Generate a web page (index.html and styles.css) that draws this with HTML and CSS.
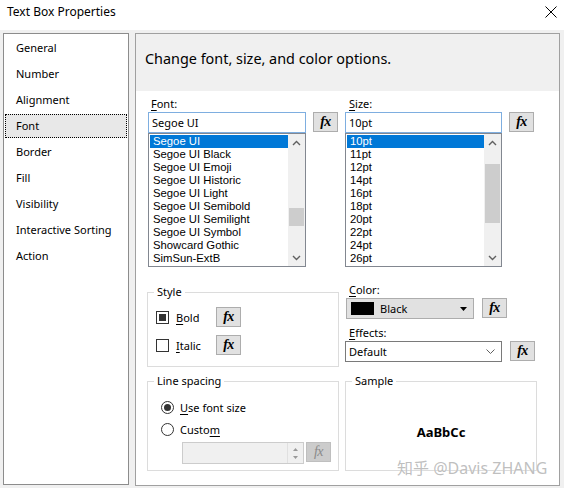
FILE: index.html
```html
<!DOCTYPE html>
<html>
<head>
<meta charset="utf-8">
<link rel="stylesheet" href="styles.css">
</head>
<body>
<div class="titlebar">
  <span class="title">Text Box Properties</span>
  <svg class="close" width="12" height="12" viewBox="0 0 12 12"><path d="M0.5 0.5 L11.5 11.5 M11.5 0.5 L0.5 11.5" stroke="#000" stroke-width="1" fill="none"/></svg>
</div>
<div class="main">
  <div class="nav">
    <div class="nav-item">General</div>
    <div class="nav-item">Number</div>
    <div class="nav-item">Alignment</div>
    <div class="nav-item selected">Font</div>
    <div class="nav-item">Border</div>
    <div class="nav-item">Fill</div>
    <div class="nav-item">Visibility</div>
    <div class="nav-item">Interactive Sorting</div>
    <div class="nav-item">Action</div>
  </div>
  <div class="content">
    <div class="header">Change font, size, and color options.</div>
    <div class="body">
      <div class="grid">
        <div class="col">
          <div class="label"><u>F</u>ont:</div>
          <div class="input-row">
            <div class="textbox font-box">Segoe UI</div>
            <div class="fx">fx</div>
          </div>
          <div class="listbox font-list">
            <div class="items">
              <div class="item sel">Segoe UI</div>
              <div class="item">Segoe UI Black</div>
              <div class="item">Segoe UI Emoji</div>
              <div class="item">Segoe UI Historic</div>
              <div class="item">Segoe UI Light</div>
              <div class="item">Segoe UI Semibold</div>
              <div class="item">Segoe UI Semilight</div>
              <div class="item">Segoe UI Symbol</div>
              <div class="item">Showcard Gothic</div>
              <div class="item">SimSun-ExtB</div>
            </div>
            <div class="scrollbar">
              <div class="arrow"><svg width="9" height="6" viewBox="0 0 9 6"><path d="M1 5 L4.5 1.5 L8 5" stroke="#606060" stroke-width="1.4" fill="none"/></svg></div>
              <div class="track"><div class="thumb font-thumb"></div></div>
              <div class="arrow"><svg width="9" height="6" viewBox="0 0 9 6"><path d="M1 1 L4.5 4.5 L8 1" stroke="#606060" stroke-width="1.4" fill="none"/></svg></div>
            </div>
          </div>
        </div>
        <div class="col">
          <div class="label"><u>S</u>ize:</div>
          <div class="input-row">
            <div class="textbox size-box">10pt</div>
            <div class="fx">fx</div>
          </div>
          <div class="listbox size-list">
            <div class="items">
              <div class="item sel">10pt</div>
              <div class="item">11pt</div>
              <div class="item">12pt</div>
              <div class="item">14pt</div>
              <div class="item">16pt</div>
              <div class="item">18pt</div>
              <div class="item">20pt</div>
              <div class="item">22pt</div>
              <div class="item">24pt</div>
              <div class="item">26pt</div>
            </div>
            <div class="scrollbar">
              <div class="arrow"><svg width="9" height="6" viewBox="0 0 9 6"><path d="M1 5 L4.5 1.5 L8 5" stroke="#606060" stroke-width="1.4" fill="none"/></svg></div>
              <div class="track"><div class="thumb size-thumb"></div></div>
              <div class="arrow"><svg width="9" height="6" viewBox="0 0 9 6"><path d="M1 1 L4.5 4.5 L8 1" stroke="#606060" stroke-width="1.4" fill="none"/></svg></div>
            </div>
          </div>
        </div>

        <fieldset class="group style-group">
          <legend>Style</legend>
          <div class="group-body">
            <div class="opt-row">
              <div class="check-label"><span class="checkbox checked"></span><span><u>B</u>old</span></div>
              <div class="fx">fx</div>
            </div>
            <div class="opt-row second">
              <div class="check-label"><span class="checkbox"></span><span><u>I</u>talic</span></div>
              <div class="fx">fx</div>
            </div>
          </div>
        </fieldset>
        <div class="col color-col">
          <div class="label"><u>C</u>olor:</div>
          <div class="input-row">
            <div class="color-drop">
              <span class="swatch"></span>
              <span class="color-name">Black</span>
              <svg class="drop-tri" width="7" height="4" viewBox="0 0 7 4"><path d="M0 0 L7 0 L3.5 4 Z" fill="#000"/></svg>
            </div>
            <div class="fx">fx</div>
          </div>
          <div class="label effects-label"><u>E</u>ffects:</div>
          <div class="input-row">
            <div class="combo">
              <span>Default</span>
              <svg width="9" height="5" viewBox="0 0 9 5"><path d="M0.5 0.5 L4.5 4.5 L8.5 0.5" stroke="#606060" stroke-width="1" fill="none"/></svg>
            </div>
            <div class="fx">fx</div>
          </div>
        </div>

        <fieldset class="group line-group">
          <legend>Line spacing</legend>
          <div class="group-body">
            <div class="radio-row"><span class="radio checked"></span><span><u>U</u>se font size</span></div>
            <div class="radio-row"><span class="radio"></span><span>Custo<u>m</u></span></div>
            <div class="spin-row">
              <div class="spinbox">
                <div class="spin-btns">
                  <svg width="5" height="3" viewBox="0 0 5 3"><path d="M0 3 L2.5 0 L5 3 Z" fill="#9a9a9a"/></svg>
                  <svg width="5" height="3" viewBox="0 0 5 3"><path d="M0 0 L2.5 3 L5 0 Z" fill="#9a9a9a"/></svg>
                </div>
              </div>
              <div class="fx disabled">fx</div>
            </div>
          </div>
        </fieldset>
        <fieldset class="group sample-group">
          <legend>Sample</legend>
          <div class="sample-text">AaBbCc</div>
        </fieldset>
      </div>
      <div class="watermark">知乎 @Davis ZHANG</div>
    </div>
  </div>
</div>
</body>
</html>
```
FILE: styles.css
```css
* { box-sizing: border-box; }
body {
  margin: 0;
  width: 564px;
  height: 488px;
  overflow: hidden;
  background: #f0f0f0;
  font-family: "Noto Sans", "Noto Sans CJK SC", sans-serif;
  font-size: 11px;
  color: #000;
}
u { text-decoration: underline; text-underline-offset: 2px; }
.titlebar {
  height: 30px;
  background: #fff;
  display: flex;
  justify-content: space-between;
  align-items: flex-start;
  padding: 4px 7px 0 7px;
}
.title { font-size: 12px; line-height: 16px; }
.close { margin-top: 2px; }
.main {
  display: flex;
  gap: 6px;
  padding: 3px 0 0 3px;
}
.nav {
  width: 126px;
  height: 452px;
  background: #fff;
  border: 1px solid #8c8c8c;
  padding: 1px 1px;
}
.nav-item {
  height: 24px;
  margin-bottom: 2px;
  line-height: 22px;
  padding-left: 10px;
  border: 1px dotted transparent;
}
.nav-item:first-child { margin-top: 1px; }
.nav-item.selected {
  background: #e8e8e8;
  border-color: #000;
}
.content {
  width: 425px;
  height: 453px;
  background: #fff;
  border: 1px solid #a0a0a0;
  display: flex;
  flex-direction: column;
}
.header {
  height: 57px;
  background: #f0f0f0;
  padding: 15px 0 0 9px;
  font-size: 14.4px;
  line-height: 20px;
}
.body {
  position: relative;
  flex: 1;
  padding: 5px 0 0 11px;
}
.grid {
  display: grid;
  grid-template-columns: 192px 192px;
  column-gap: 6px;
  align-items: start;
}
.label { height: 16px; line-height: 16px; padding-left: 4px; }
.input-row { display: flex; align-items: flex-start; }
.textbox {
  width: 158px;
  height: 21px;
  border: 1px solid #7eaee0;
  padding-left: 3px;
  line-height: 19px;
}
.font-box { margin-left: 1px; }
.size-box { width: 157px; }
.fx {
  width: 25px;
  height: 20px;
  margin-left: 7px;
  background: #e1e1e1;
  border: 1px solid #adadad;
  font-family: "Liberation Serif", serif;
  font-style: italic;
  font-weight: bold;
  font-size: 14px;
  line-height: 17px;
  text-align: center;
  letter-spacing: -0.5px;
}
.fx.disabled { background: #cccccc; border-color: #bfbfbf; color: #8a8a8a; font-weight: normal; }
.listbox {
  display: flex;
  width: 158px;
  height: 134px;
  margin-left: 1px;
  border: 1px solid #828790;
  padding: 1px 0 1px 1px;
}
.size-list { margin-left: 0; width: 157px; }
.items { flex: 1; }
.item {
  height: 13px;
  line-height: 13px;
  padding-left: 3px;
  white-space: nowrap;
  font-family: "Liberation Sans", sans-serif;
  font-size: 11.3px;
}
.item.sel { background: #0078d7; color: #fff; }
.scrollbar {
  width: 17px;
  margin-top: -1px;
  margin-bottom: -1px;
  background: #f0f0f0;
  display: flex;
  flex-direction: column;
}
.arrow { height: 17px; display: flex; align-items: center; justify-content: center; }
.track { flex: 1; position: relative; }
.thumb { position: absolute; left: 1px; right: 1px; background: #cdcdcd; }
.font-thumb { top: 57px; height: 18px; }
.size-thumb { top: 13px; height: 59px; }

.group {
  margin: 0;
  padding: 0;
  border: 1px solid #dcdcdc;
  min-width: 0;
}
.group legend {
  margin-left: 6px;
  padding: 0 3px;
  line-height: 16px;
  font-size: 11px;
}
.style-group { margin-top: 17px; }
.style-group .group-body { padding: 7px 0 11px 8px; }
.opt-row { display: flex; align-items: center; height: 20px; }
.opt-row.second { margin-top: 8px; }
.check-label { display: flex; align-items: center; width: 60px; gap: 7px; }
.opt-row .fx { margin-left: 0; }
.checkbox {
  width: 13px; height: 13px;
  border: 1px solid #333;
  background: #fff;
  display: flex; align-items: center; justify-content: center;
}
.checkbox.checked::after { content: ""; width: 7px; height: 7px; background: #333; }

.color-col { padding-top: 15px; }
.color-drop {
  width: 128px;
  height: 21px;
  margin-left: 1px;
  background: #e1e1e1;
  border: 1px solid #adadad;
  display: flex;
  align-items: center;
  padding-left: 4px;
}
.swatch { width: 23px; height: 13px; background: #000; }
.color-name { margin-left: 6px; flex: 1; }
.drop-tri { margin-right: 6px; }
.color-col .color-drop + .fx { margin-left: 8px; }
.effects-label { margin-top: 6px; }
.combo {
  width: 157px;
  height: 21px;
  border: 1px solid #7a7a7a;
  display: flex;
  align-items: center;
  justify-content: space-between;
  padding: 0 6px 0 3px;
}
.combo + .fx { margin-left: 8px; }

.line-group, .sample-group { margin-top: 6px; height: 98px; }
.line-group .group-body { padding: 10px 0 6px 13px; }
.radio-row { display: flex; align-items: center; gap: 6px; height: 16px; }
.radio-row + .radio-row { margin-top: 6px; }
.radio {
  width: 13px; height: 13px;
  border: 1px solid #333;
  border-radius: 50%;
  display: flex; align-items: center; justify-content: center;
}
.radio.checked::after { content: ""; width: 7px; height: 7px; border-radius: 50%; background: #333; }
.spin-row { display: flex; margin-top: 5px; padding-left: 21px; }
.spinbox {
  width: 122px;
  height: 22px;
  background: #f0f0f0;
  border: 1px solid #cccccc;
  display: flex;
  justify-content: flex-end;
}
.spin-btns {
  width: 16px;
  display: flex;
  flex-direction: column;
  align-items: center;
  justify-content: space-around;
  padding: 2px 0;
  border-left: 1px solid #e0e0e0;
}
.spin-row .fx { margin-left: 2px; }
.sample-group { display: flex; justify-content: center; }
.sample-text { font-weight: bold; font-size: 13px; margin-top: 34px; }

.watermark {
  position: absolute;
  left: 261px;
  top: 364px;
  font-size: 16px;
  color: rgba(170, 170, 170, 0.75);
  white-space: nowrap;
  text-shadow: 0 0 1px #fff;
}
```
